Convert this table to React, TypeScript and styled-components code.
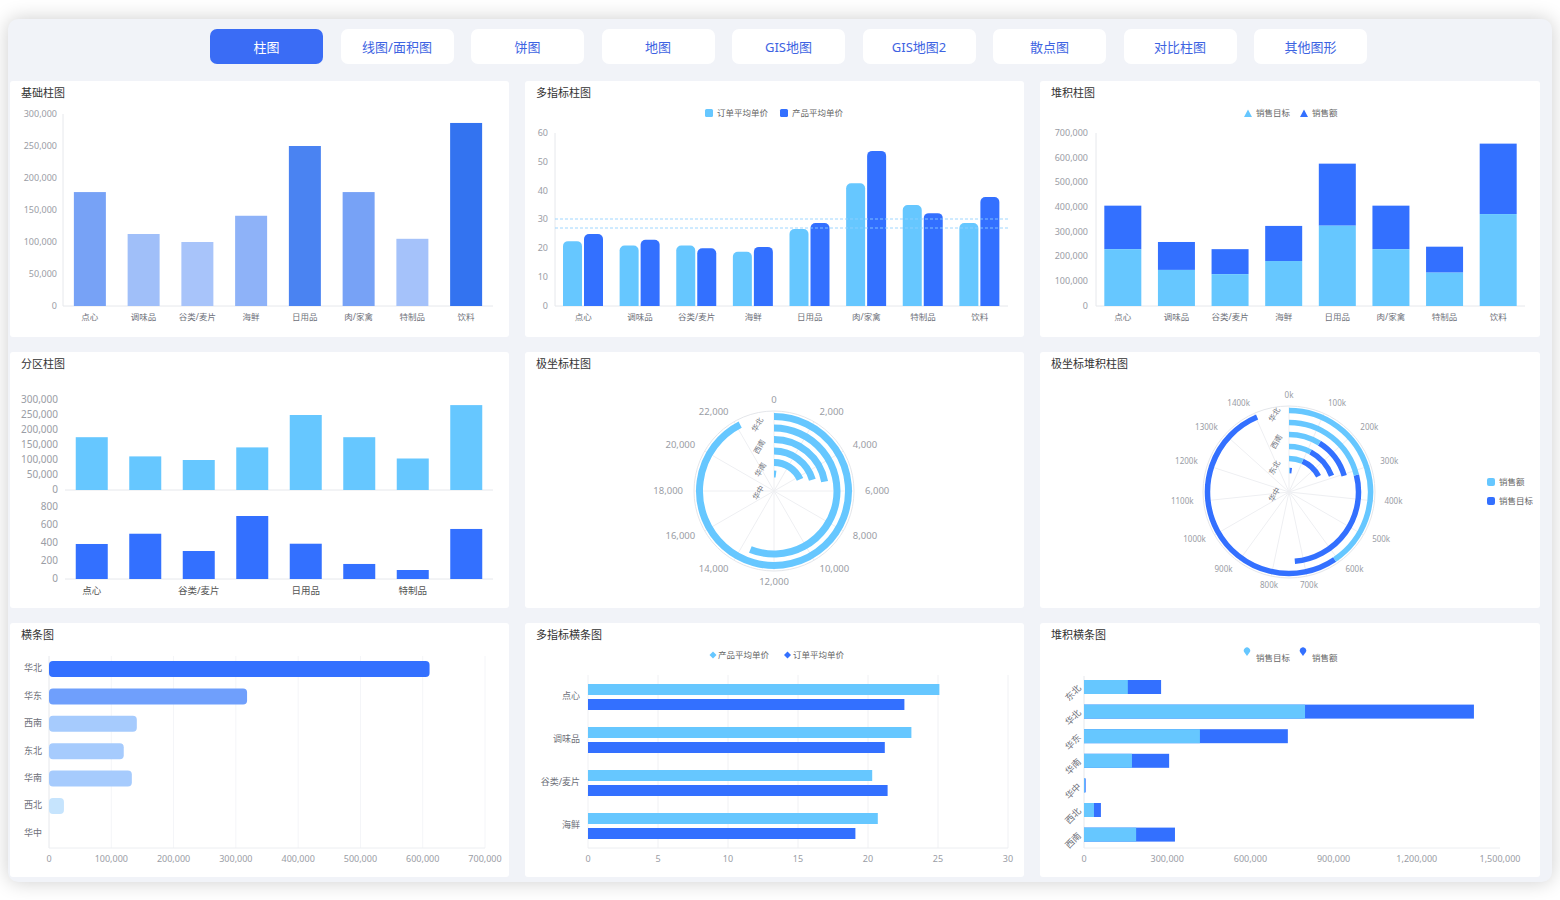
import React from 'react';
import styled, { createGlobalStyle } from 'styled-components';

const FONT = `"Noto Sans", "Noto Sans CJK SC", sans-serif`;
const LIGHT = '#66c7ff';
const DARK = '#3370ff';

const GlobalStyle = createGlobalStyle`
  html, body { margin: 0; padding: 0; background: #ffffff; }
  body { font-family: ${FONT}; }
`;

const Page = styled.div`
  width: 1560px;
  height: 900px;
  box-sizing: border-box;
  padding: 19px 8px 0 8px;
  background: #ffffff;
  overflow: hidden;
`;

const Card = styled.div`
  width: 1544px;
  height: 863px;
  box-sizing: border-box;
  background: #f1f3f8;
  border-radius: 10px;
  box-shadow: 0 0 20px rgba(0, 0, 0, 0.2);
  padding: 10px 12px 0 2px;
  display: flex;
  flex-direction: column;
`;

const TabBar = styled.div`
  display: flex;
  gap: 17.5px;
  padding-left: 200px;
  height: 35px;
`;

const Tab = styled.div<{ $active?: boolean }>`
  width: 113px;
  height: 35px;
  border-radius: 7px;
  display: flex;
  align-items: center;
  justify-content: center;
  font-size: 13px;
  background: ${(p) => (p.$active ? '#3a6cf5' : '#ffffff')};
  color: ${(p) => (p.$active ? '#ffffff' : '#3d63e2')};
`;

const Grid = styled.div`
  margin-top: 17px;
  display: grid;
  grid-template-columns: 499px 499px 500px;
  grid-template-rows: 256px 256px 254px;
  column-gap: 16px;
  row-gap: 15px;
`;

const Panel = styled.div`
  background: #ffffff;
  border-radius: 3px;
  display: flex;
  flex-direction: column;
  overflow: hidden;
`;

const PanelTitle = styled.div`
  height: 22px;
  line-height: 24px;
  padding-left: 11px;
  font-size: 11px;
  color: #333;
  flex: none;
`;

const Svg = styled.svg`
  display: block;
  flex: none;
  overflow: visible;
  font-family: ${FONT};
`;

const Tick = styled.text<{ $size?: number }>`
  font-size: ${(p) => p.$size ?? 9}px;
  fill: #9a9da5;
`;

const Cat = styled.text<{ $size?: number; $dark?: boolean }>`
  font-size: ${(p) => p.$size ?? 8.5}px;
  fill: ${(p) => (p.$dark ? '#555' : '#6e717a')};
`;

const LegendText = styled.text`
  font-size: 8.5px;
  fill: #666;
`;

const cats = ['点心', '调味品', '谷类/麦片', '海鲜', '日用品', '肉/家禽', '特制品', '饮料'];
const fmt = (n: number) => n.toLocaleString('en-US');

const mix = (v: number) => {
  const t = Math.max(0, Math.min(1, (v - 100) / 186));
  const a = [168, 196, 250];
  const b = [51, 115, 240];
  return `rgb(${a.map((c, i) => Math.round(c + (b[i] - c) * t)).join(',')})`;
};

const roundTop = (x: number, y: number, w: number, h: number, r: number) =>
  `M${x} ${y + h} V${y + r} A${r} ${r} 0 0 1 ${x + r} ${y} H${x + w - r} A${r} ${r} 0 0 1 ${x + w} ${y + r} V${y + h} Z`;

const pt = (cx: number, cy: number, r: number, a: number) => [
  cx + r * Math.sin((a * Math.PI) / 180),
  cy - r * Math.cos((a * Math.PI) / 180),
];

const arc = (cx: number, cy: number, r: number, a0: number, a1: number) => {
  const [x0, y0] = pt(cx, cy, r, a0);
  const [x1, y1] = pt(cx, cy, r, a1);
  const large = a1 - a0 > 180 ? 1 : 0;
  return `M${x0} ${y0} A${r} ${r} 0 ${large} 1 ${x1} ${y1}`;
};

const anchorFor = (a: number, th: number) => {
  const s = Math.sin((a * Math.PI) / 180);
  return s > th ? 'start' : s < -th ? 'end' : 'middle';
};

function ChartPanel({ title, w, h, children }: { title: string; w: number; h: number; children: React.ReactNode }) {
  return (
    <Panel>
      <PanelTitle>{title}</PanelTitle>
      <Svg width={w} height={h} viewBox={`0 22 ${w} ${h}`}>
        {children}
      </Svg>
    </Panel>
  );
}

function BasicBar() {
  const vals = [178, 112.5, 100, 141, 250, 178, 105, 286];
  const X0 = 53, X1 = 483, Y0 = 225, YT = 33;
  const cw = (X1 - X0) / 8;
  const s = (Y0 - YT) / 300;
  return (
    <>
      {[0, 50, 100, 150, 200, 250, 300].map((v) => (
        <Tick key={v} x={47} y={Y0 - v * s + 0.5} textAnchor="end" dominantBaseline="middle">
          {fmt(v * 1000)}
        </Tick>
      ))}
      <line x1={X0} y1={YT} x2={X0} y2={Y0} stroke="#e6e8ec" />
      <line x1={X0} y1={Y0} x2={X1} y2={Y0} stroke="#e6e8ec" />
      {vals.map((v, i) => (
        <rect key={i} x={X0 + i * cw + (cw - 32) / 2} y={Y0 - v * s} width={32} height={v * s} fill={mix(v)} />
      ))}
      {cats.map((c, i) => (
        <Cat key={c} x={X0 + i * cw + cw / 2} y={237} textAnchor="middle" dominantBaseline="middle">
          {c}
        </Cat>
      ))}
    </>
  );
}

function MultiBar() {
  const light = [22.5, 21, 21, 18.8, 26.7, 42.6, 35, 28.8];
  const dark = [25, 23, 20, 20.5, 28.8, 53.8, 32.2, 37.8];
  const X0 = 30, X1 = 483, Y0 = 225, YT = 52;
  const cw = (X1 - X0) / 8;
  const s = (Y0 - YT) / 60;
  return (
    <>
      <rect x={180} y={28} width={8} height={8} rx={1.5} fill={LIGHT} />
      <LegendText x={192} y={32.5} dominantBaseline="middle">订单平均单价</LegendText>
      <rect x={255} y={28} width={8} height={8} rx={1.5} fill={DARK} />
      <LegendText x={267} y={32.5} dominantBaseline="middle">产品平均单价</LegendText>
      {[0, 10, 20, 30, 40, 50, 60].map((v) => (
        <Tick key={v} x={23} y={Y0 - v * s + 0.5} textAnchor="end" dominantBaseline="middle">
          {v}
        </Tick>
      ))}
      <line x1={X0} y1={YT} x2={X0} y2={Y0} stroke="#e6e8ec" />
      <line x1={X0} y1={Y0} x2={X1} y2={Y0} stroke="#e6e8ec" />
      {light.map((v, i) => (
        <path key={'l' + i} d={roundTop(X0 + i * cw + 8, Y0 - v * s, 19, v * s, 5)} fill={LIGHT} />
      ))}
      {dark.map((v, i) => (
        <path key={'d' + i} d={roundTop(X0 + i * cw + 29, Y0 - v * s, 19, v * s, 5)} fill={DARK} />
      ))}
      <line x1={X0} y1={138} x2={X1} y2={138} stroke="#8fd0ff" strokeDasharray="3 2" opacity={0.85} />
      <line x1={X0} y1={147} x2={X1} y2={147} stroke="#8fd0ff" strokeDasharray="3 2" opacity={0.85} />
      {cats.map((c, i) => (
        <Cat key={c} x={X0 + i * cw + cw / 2} y={237} textAnchor="middle" dominantBaseline="middle">
          {c}
        </Cat>
      ))}
    </>
  );
}

function StackBar() {
  const light = [230, 146, 129, 182, 325, 230, 135, 372];
  const total = [406, 259, 230, 324, 576, 406, 240, 657];
  const X0 = 56, X1 = 485, Y0 = 225, YT = 52;
  const cw = (X1 - X0) / 8;
  const s = (Y0 - YT) / 700;
  return (
    <>
      <path d="M204 36 L208 28.5 L212 36 Z" fill={LIGHT} />
      <LegendText x={216} y={32.5} dominantBaseline="middle">销售目标</LegendText>
      <path d="M260 36 L264 28.5 L268 36 Z" fill={DARK} />
      <LegendText x={272} y={32.5} dominantBaseline="middle">销售额</LegendText>
      {[0, 100, 200, 300, 400, 500, 600, 700].map((v) => (
        <Tick key={v} x={48} y={Y0 - v * s + 0.5} textAnchor="end" dominantBaseline="middle">
          {fmt(v * 1000)}
        </Tick>
      ))}
      <line x1={X0} y1={YT} x2={X0} y2={Y0} stroke="#e6e8ec" />
      <line x1={X0} y1={Y0} x2={X1} y2={Y0} stroke="#e6e8ec" />
      {total.map((t, i) => {
        const x = X0 + i * cw + (cw - 37) / 2;
        return (
          <g key={i}>
            <rect x={x} y={Y0 - t * s} width={37} height={(t - light[i]) * s} fill={DARK} />
            <rect x={x} y={Y0 - light[i] * s} width={37} height={light[i] * s} fill={LIGHT} />
          </g>
        );
      })}
      {cats.map((c, i) => (
        <Cat key={c} x={X0 + i * cw + cw / 2} y={237} textAnchor="middle" dominantBaseline="middle">
          {c}
        </Cat>
      ))}
    </>
  );
}

function SplitBar() {
  const top = [176, 112, 100, 142, 250, 176, 105, 283];
  const bottom = [389, 503, 311, 700, 392, 167, 100, 556];
  const X0 = 55, X1 = 483;
  const cw = (X1 - X0) / 8;
  const s1 = 90 / 300;
  const s2 = 72 / 800;
  const labelIdx = [0, 2, 4, 6];
  return (
    <>
      {[0, 50, 100, 150, 200, 250, 300].map((v) => (
        <Tick key={'a' + v} $size={10} x={48} y={138.5 - v * s1} textAnchor="end" dominantBaseline="middle">
          {fmt(v * 1000)}
        </Tick>
      ))}
      {[0, 200, 400, 600, 800].map((v) => (
        <Tick key={'b' + v} $size={10} x={48} y={227.5 - v * s2} textAnchor="end" dominantBaseline="middle">
          {v}
        </Tick>
      ))}
      <line x1={X0} y1={138} x2={X1} y2={138} stroke="#e6e8ec" />
      <line x1={X0} y1={227} x2={X1} y2={227} stroke="#e6e8ec" />
      {top.map((v, i) => (
        <rect key={'t' + i} x={X0 + i * cw + (cw - 32) / 2} y={138 - v * s1} width={32} height={v * s1} fill={LIGHT} />
      ))}
      {bottom.map((v, i) => (
        <rect key={'u' + i} x={X0 + i * cw + (cw - 32) / 2} y={227 - v * s2} width={32} height={v * s2} fill={DARK} />
      ))}
      {labelIdx.map((i) => (
        <Cat key={i} $size={9.5} $dark x={X0 + i * cw + cw / 2} y={239} textAnchor="middle" dominantBaseline="middle">
          {cats[i]}
        </Cat>
      ))}
    </>
  );
}

function PolarBar() {
  const cx = 249, cy = 139, R = 80;
  const vals = [22200, 13470, 5300, 4900, 4400, 450, 0];
  const radii = [74.5, 63, 51.5, 40, 28.5, 17, 5.5];
  const labels = [
    ['华北', 233, 73],
    ['西南', 235, 95],
    ['华南', 236, 118],
    ['华中', 234, 141],
  ] as const;
  return (
    <>
      <circle cx={cx} cy={cy} r={R} fill="none" stroke="#e4e6ea" />
      {Array.from({ length: 12 }, (_, i) => {
        const [x, y] = pt(cx, cy, R, i * 30);
        return <line key={i} x1={cx} y1={cy} x2={x} y2={y} stroke="#eeeff2" />;
      })}
      {Array.from({ length: 12 }, (_, i) => {
        const [x, y] = pt(cx, cy, 91, i * 30);
        return (
          <Tick key={'t' + i} $size={9.5} x={x} y={y} textAnchor={anchorFor(i * 30, 0.2)} dominantBaseline="middle">
            {fmt(i * 2000)}
          </Tick>
        );
      })}
      {vals.map((v, i) =>
        v > 0 ? (
          <path key={i} d={arc(cx, cy, radii[i], 0, (v / 24000) * 360)} stroke={LIGHT} strokeWidth={7} fill="none" />
        ) : null
      )}
      {labels.map(([t, x, y]) => (
        <Cat key={t} $size={7.5} x={x} y={y} textAnchor="middle" dominantBaseline="middle" transform={`rotate(-60 ${x} ${y})`}>
          {t}
        </Cat>
      ))}
    </>
  );
}

function PolarStack() {
  const cx = 249, cy = 140, R = 86;
  const light = [608, 316, 133, 117, 99, 8, 0];
  const total = [1404, 730, 307, 288, 258, 30, 0];
  const radii = [81.5, 69.5, 57.5, 45.5, 33.5, 21.5, 9.5];
  const labels = [
    ['华北', 235, 63],
    ['西南', 237, 90],
    ['东北', 235, 116],
    ['华中', 235, 143],
  ] as const;
  const ang = (v: number) => (v / 1500) * 360;
  return (
    <>
      <circle cx={cx} cy={cy} r={R} fill="none" stroke="#e4e6ea" />
      {Array.from({ length: 15 }, (_, i) => {
        const [x, y] = pt(cx, cy, R, i * 24);
        return <line key={i} x1={cx} y1={cy} x2={x} y2={y} stroke="#eeeff2" />;
      })}
      {Array.from({ length: 15 }, (_, i) => {
        const [x, y] = pt(cx, cy, 96, i * 24);
        return (
          <Tick key={'t' + i} $size={8} x={x} y={y} textAnchor={anchorFor(i * 24, 0.25)} dominantBaseline="middle">
            {i * 100}k
          </Tick>
        );
      })}
      {total.map((t, i) => (
        <g key={i}>
          {t > light[i] ? (
            <path d={arc(cx, cy, radii[i], ang(light[i]), ang(t))} stroke={DARK} strokeWidth={5.5} fill="none" />
          ) : null}
          {light[i] > 0 ? (
            <path d={arc(cx, cy, radii[i], 0, ang(light[i]))} stroke={LIGHT} strokeWidth={5.5} fill="none" />
          ) : null}
        </g>
      ))}
      {labels.map(([t, x, y]) => (
        <Cat key={t + y} $size={7.5} x={x} y={y} textAnchor="middle" dominantBaseline="middle" transform={`rotate(-60 ${x} ${y})`}>
          {t}
        </Cat>
      ))}
      <rect x={447} y={126} width={8} height={8} rx={2} fill={LIGHT} />
      <LegendText x={459} y={130.5} dominantBaseline="middle">销售额</LegendText>
      <rect x={447} y={145} width={8} height={8} rx={2} fill={DARK} />
      <LegendText x={459} y={149.5} dominantBaseline="middle">销售目标</LegendText>
    </>
  );
}

function HBar() {
  const regions = ['华北', '华东', '西南', '东北', '华南', '西北', '华中'];
  const vals = [611, 318, 141, 120, 133, 24, 0];
  const colors = ['#3370ff', '#6f9ffc', '#a6cbfd', '#a6cbfd', '#a6cbfd', '#c6e4fd', '#d8eefe'];
  const X0 = 39, X1 = 475;
  const s = (X1 - X0) / 700;
  const yc = (i: number) => 46 + i * 27.4;
  return (
    <>
      {[1, 2, 3, 4, 5, 6, 7].map((v) => (
        <line key={v} x1={X0 + v * 100 * s} y1={33} x2={X0 + v * 100 * s} y2={225} stroke="#f4f5f8" />
      ))}
      <line x1={X0} y1={33} x2={X0} y2={225} stroke="#e6e8ec" />
      <line x1={X0} y1={225} x2={X1} y2={225} stroke="#eceef1" />
      {vals.map((v, i) =>
        v > 0 ? <rect key={i} x={X0} y={yc(i) - 8} width={v * s} height={16} rx={4} fill={colors[i]} /> : null
      )}
      {regions.map((r, i) => (
        <Cat key={r} $size={9} x={32} y={yc(i)} textAnchor="end" dominantBaseline="middle">
          {r}
        </Cat>
      ))}
      {[0, 1, 2, 3, 4, 5, 6, 7].map((v) => (
        <Tick key={v} x={X0 + v * 100 * s} y={237} textAnchor="middle" dominantBaseline="middle">
          {fmt(v * 100000)}
        </Tick>
      ))}
    </>
  );
}

function MultiHBar() {
  const names = ['点心', '调味品', '谷类/麦片', '海鲜'];
  const light = [25.1, 23.1, 20.3, 20.7];
  const dark = [22.6, 21.2, 21.4, 19.1];
  const X0 = 63;
  const s = 14;
  return (
    <>
      <path d="M188 28.5 L191.5 32 L188 35.5 L184.5 32 Z" fill={LIGHT} />
      <LegendText x={193} y={32.5} dominantBaseline="middle">产品平均单价</LegendText>
      <path d="M262.5 28.5 L266 32 L262.5 35.5 L259 32 Z" fill={DARK} />
      <LegendText x={268} y={32.5} dominantBaseline="middle">订单平均单价</LegendText>
      {[0, 5, 10, 15, 20, 25, 30].map((v) => (
        <line key={v} x1={X0 + v * s} y1={52} x2={X0 + v * s} y2={225} stroke="#f0f1f4" />
      ))}
      <line x1={X0} y1={225} x2={X0 + 30 * s} y2={225} stroke="#eceef1" />
      {names.map((n, i) => {
        const y = 61 + i * 43;
        return (
          <g key={n}>
            <rect x={X0} y={y} width={light[i] * s} height={11} fill={LIGHT} />
            <rect x={X0} y={y + 15} width={dark[i] * s} height={11} fill={DARK} />
            <Cat $size={9} x={55} y={y + 13} textAnchor="end" dominantBaseline="middle">
              {n}
            </Cat>
          </g>
        );
      })}
      {[0, 5, 10, 15, 20, 25, 30].map((v) => (
        <Tick key={'t' + v} x={X0 + v * s} y={237} textAnchor="middle" dominantBaseline="middle">
          {v}
        </Tick>
      ))}
    </>
  );
}

const pin = (cx: number, cy: number) =>
  `M${cx} ${cy + 4} L${cx - 2.7} ${cy + 0.3} A3.2 3.2 0 1 1 ${cx + 2.7} ${cy + 0.3} Z`;

function StackHBar() {
  const regions = ['东北', '华北', '华东', '华南', '华中', '西北', '西南'];
  const light = [158, 797, 418, 173, 3, 36, 188];
  const total = [278, 1406, 735, 307, 6, 61, 328];
  const X0 = 44, X1 = 460;
  const s = (X1 - X0) / 1500;
  return (
    <>
      <path d={pin(207, 29)} fill={LIGHT} />
      <LegendText x={216} y={36} dominantBaseline="middle">销售目标</LegendText>
      <path d={pin(263, 29)} fill={DARK} />
      <LegendText x={272} y={36} dominantBaseline="middle">销售额</LegendText>
      <line x1={X0} y1={53} x2={X0} y2={225} stroke="#e6e8ec" />
      <line x1={X0} y1={225} x2={X1} y2={225} stroke="#eceef1" />
      {regions.map((r, i) => {
        const y = 57 + i * 24.6;
        return (
          <g key={r}>
            <rect x={X0} y={y} width={total[i] * s} height={14} fill={DARK} />
            <rect x={X0} y={y} width={light[i] * s} height={14} fill={LIGHT} />
            <Cat $size={9} x={40} y={y + 7} textAnchor="end" dominantBaseline="middle" transform={`rotate(-45 40 ${y + 7})`}>
              {r}
            </Cat>
          </g>
        );
      })}
      {[0, 300, 600, 900, 1200, 1500].map((v) => (
        <Tick key={v} x={X0 + v * s} y={237} textAnchor="middle" dominantBaseline="middle">
          {fmt(v * 1000)}
        </Tick>
      ))}
    </>
  );
}

const tabs = ['柱图', '线图/面积图', '饼图', '地图', 'GIS地图', 'GIS地图2', '散点图', '对比柱图', '其他图形'];

export default function App() {
  return (
    <>
      <GlobalStyle />
      <Page>
        <Card>
          <TabBar>
            {tabs.map((t, i) => (
              <Tab key={t} $active={i === 0}>
                {t}
              </Tab>
            ))}
          </TabBar>
          <Grid>
            <ChartPanel title="基础柱图" w={499} h={234}>
              <BasicBar />
            </ChartPanel>
            <ChartPanel title="多指标柱图" w={499} h={234}>
              <MultiBar />
            </ChartPanel>
            <ChartPanel title="堆积柱图" w={500} h={234}>
              <StackBar />
            </ChartPanel>
            <ChartPanel title="分区柱图" w={499} h={234}>
              <SplitBar />
            </ChartPanel>
            <ChartPanel title="极坐标柱图" w={499} h={234}>
              <PolarBar />
            </ChartPanel>
            <ChartPanel title="极坐标堆积柱图" w={500} h={234}>
              <PolarStack />
            </ChartPanel>
            <ChartPanel title="横条图" w={499} h={232}>
              <HBar />
            </ChartPanel>
            <ChartPanel title="多指标横条图" w={499} h={232}>
              <MultiHBar />
            </ChartPanel>
            <ChartPanel title="堆积横条图" w={500} h={232}>
              <StackHBar />
            </ChartPanel>
          </Grid>
        </Card>
      </Page>
    </>
  );
}
